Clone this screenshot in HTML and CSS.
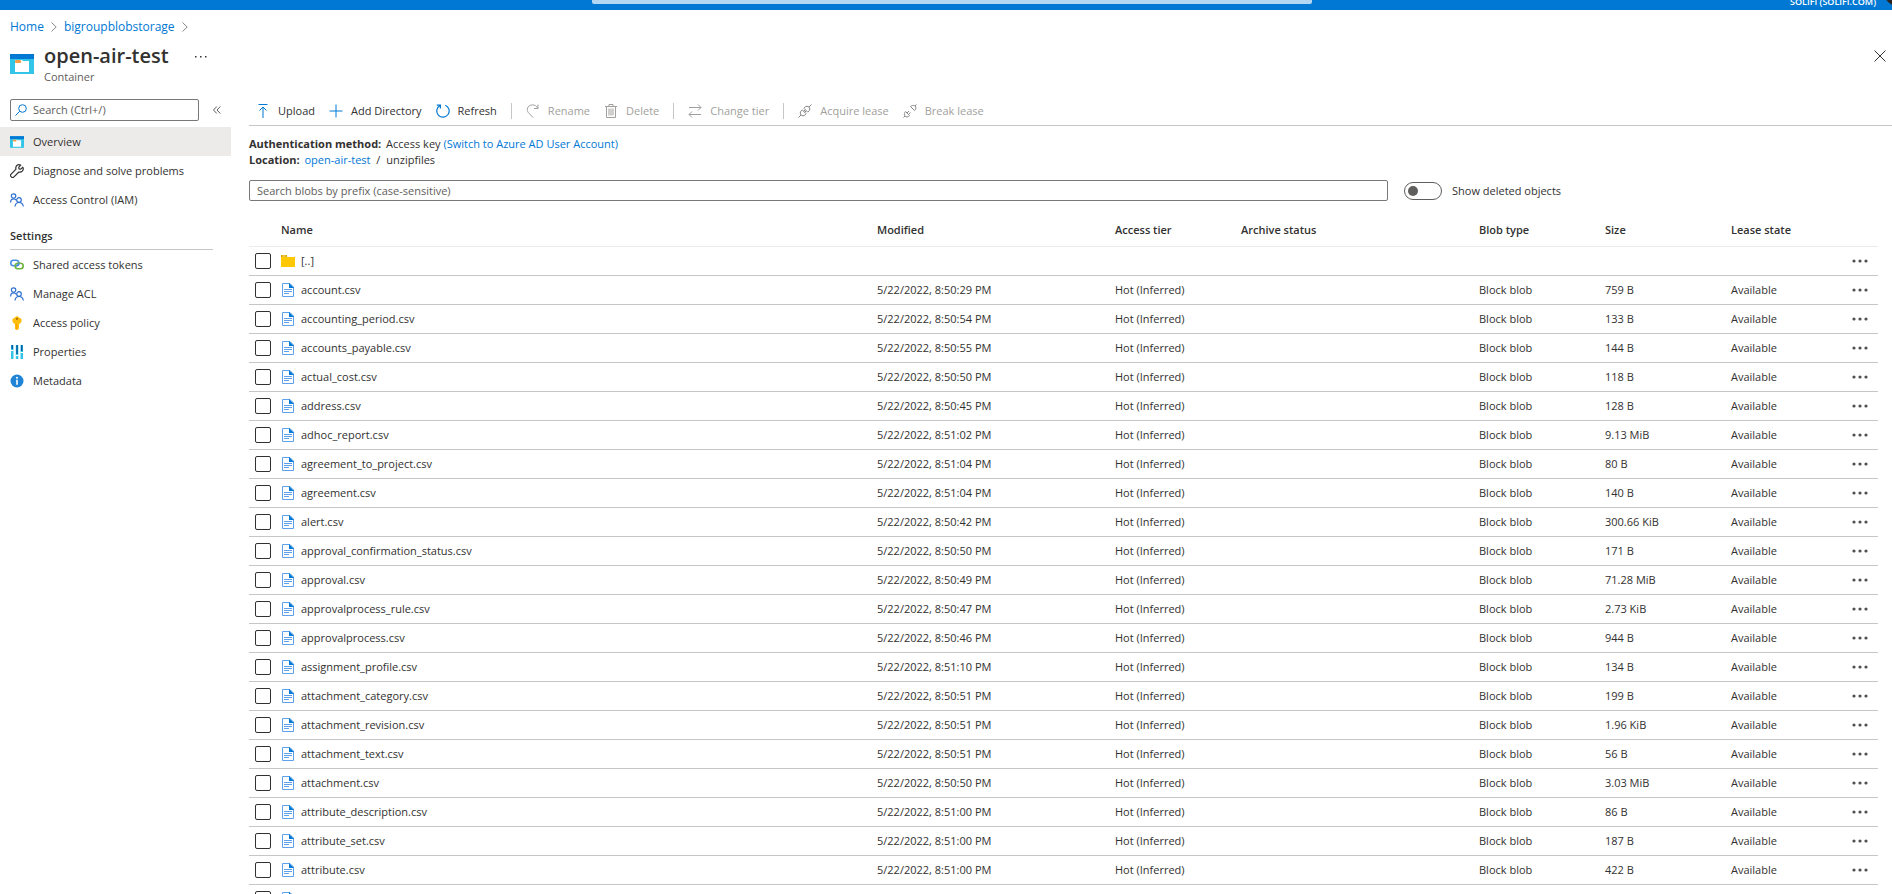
FILE: index.html
```html
<!DOCTYPE html>
<html lang="en">
<head>
  <meta charset="UTF-8">
  <meta name="viewport" content="width=device-width, initial-scale=1.0">
  <title>open-air-test</title>
  <link rel="stylesheet" href="styles.css">
</head>
<body>
  <!-- shared icons -->
  <svg class="sprite" aria-hidden="true">
    <symbol id="icon-container" viewBox="0 0 24 20">
      <rect width="24" height="20" fill="#32c5e8"/>
      <rect width="24" height="5" fill="#0078d4"/>
      <path d="M5 6h7l1 1h6v11H5z" fill="#fff"/>
      <rect x="5" y="6" width="6" height="3" rx="1" fill="#f59d45"/>
    </symbol>
    <symbol id="icon-people" viewBox="0 0 14 14">
      <g fill="none" stroke="#2f6fd0" stroke-width="1.2">
        <circle cx="3.6" cy="3" r="2.2"/>
        <path d="M.6 9.5C.6 7 2 5.800 3.600 5.800c1.200 0 2 .5 2.600 1.400"/>
        <circle cx="9" cy="7" r="2.300"/>
        <path d="M5 13.500c.3-2.600 1.800-4 4-4s3.900 1.400 4.400 4"/>
      </g>
    </symbol>
    <symbol id="icon-file" viewBox="0 0 12 14">
      <path d="M.5.5H8l3.500 3.500v9.500H.5z" fill="#fff" stroke="#5ea0ea"/>
      <path d="M7 0 12 5H7z" fill="#0078d4"/>
      <path d="M2 6.500h8M2 8.500h8M2 10.500h5" stroke="#5ea0ea"/>
    </symbol>
    <symbol id="icon-folder" viewBox="0 0 14 12">
      <path d="M0 0h6v2h8v10H0z" fill="#ffc800"/>
      <path d="M0 0h6v2H0z" fill="#dfa500"/>
      <path d="M1.500 1h3" stroke="#fff0a8" stroke-width=".8"/>
    </symbol>
    <symbol id="icon-more" viewBox="0 0 16 4">
      <g fill="#505050"><circle cx="2" cy="2" r="1.600"/><circle cx="8" cy="2" r="1.600"/><circle cx="14" cy="2" r="1.600"/></g>
    </symbol>
    <symbol id="icon-chevron" viewBox="0 0 6 10">
      <path d="M.5.5 5.200 5 .5 9.500" fill="none" stroke="#8a8886"/>
    </symbol>
  </svg>

  <header class="topbar">
    <input class="topbar-search" type="search" aria-label="Search resources">
    <span class="tenant">SOLIFI (SOLIFI.COM)</span>
    <span class="avatar"></span>
  </header>

  <nav class="breadcrumb" aria-label="Breadcrumb">
    <a href="#">Home</a>
    <svg width="6" height="10"><use href="#icon-chevron"/></svg>
    <a href="#">bigroupblobstorage</a>
    <svg width="6" height="10"><use href="#icon-chevron"/></svg>
  </nav>

  <div class="blade-header">
    <svg width="24" height="20"><use href="#icon-container"/></svg>
    <div class="blade-title">
      <h1>open-air-test</h1>
      <p>Container</p>
    </div>
    <button class="title-more" aria-label="More">
      <svg width="12" height="2" viewBox="0 0 12 2" fill="#323130"><path d="M0 0h1.500v1.500H0zM5 0h1.500v1.500H5zM10 0h1.500v1.500H10z"/></svg>
    </button>
    <button class="close" aria-label="Close">
      <svg width="12" height="12" viewBox="0 0 12 12" stroke="#323130"><path d="M.5.5l11 11M11.500.5l-11 11"/></svg>
    </button>
  </div>

  <div class="blade">
    <aside class="sidebar">
      <div class="menu-search">
        <label class="menu-search-box">
          <svg width="12" height="12" viewBox="0 0 12 12" fill="none" stroke="#0078d4"><circle cx="7.500" cy="4.500" r="3.800"/><path d="M4.800 7.200.5 11.500"/></svg>
          <input type="search" placeholder="Search (Ctrl+/)" aria-label="Search menu">
        </label>
        <button class="collapse" aria-label="Collapse menu">
          <svg width="8" height="8" viewBox="0 0 8 8" fill="none" stroke="#605e5c"><path d="M3.800.5.5 4l3.300 3.500M7.300.5 4 4l3.300 3.500"/></svg>
        </button>
      </div>

      <ul class="menu">
        <li><a class="active" href="#"><svg width="14" height="12"><use href="#icon-container"/></svg>Overview</a></li>
        <li><a href="#"><svg width="14" height="14" viewBox="0 0 14 14" fill="none" stroke="#323130" stroke-width="1.200" stroke-linejoin="round"><path d="M12.800 3.200 10.800 5.200 9 4.900 8.800 3.200l2-2C9.400.4 7.700.6 6.700 1.700c-.9 1-1.100 2.300-.7 3.400L.9 10.300a1.500 1.500 0 0 0 0 2.100l.7.700a1.500 1.500 0 0 0 2.100 0L8.900 8c1.200.4 2.500.1 3.400-.8 1-1.100 1.200-2.700.5-4z"/></svg>Diagnose and solve problems</a></li>
        <li><a href="#"><svg width="14" height="14"><use href="#icon-people"/></svg>Access Control (IAM)</a></li>
      </ul>

      <h2>Settings</h2>
      <ul class="menu">
        <li><a href="#"><svg width="14" height="12" viewBox="0 0 14 12" fill="none" stroke-width="1.600"><rect x=".8" y="1.300" width="8" height="5.400" rx="2.700" stroke="#4a90e2"/><rect x="5.200" y="4.300" width="8" height="5.400" rx="2.700" stroke="#6bb33e"/><path d="M6 6.700h.5c1.300 0 2.300-1 2.300-2.500" stroke="#4a90e2"/></svg>Shared access tokens</a></li>
        <li><a href="#"><svg width="14" height="14"><use href="#icon-people"/></svg>Manage ACL</a></li>
        <li><a href="#"><svg width="14" height="14" viewBox="0 0 14 14"><path d="M7 0l4.500 3v3L9 8.200v4.300L7.500 14H6.200L5 12.800V8.200L2.500 6V3z" fill="#ffbe0b"/><circle cx="7" cy="2.800" r="1.100" fill="#a86a00"/><path d="M6.300 8v5" stroke="#ff9a00"/></svg>Access policy</a></li>
        <li><a href="#"><svg width="14" height="14" viewBox="0 0 14 14"><path d="M1 0h2.500v14H1zM5.800 0h2.500v14H5.800zM10.500 0H13v14h-2.500z" fill="#32c5e8"/><path d="M1.500 0H3v4H1.500zM6.300 0h1.500v9H6.300zM11 0h1.500v6H11z" fill="#005ba1"/><path d="M1 5.500h2.500M5.800 10.500h2.500M10.500 7.500H13" stroke="#fff"/></svg>Properties</a></li>
        <li><a href="#"><svg width="14" height="14" viewBox="0 0 14 14"><circle cx="7" cy="7" r="6.500" fill="#1f83d6"/><circle cx="7" cy="3.700" r="1" fill="#fff"/><path d="M7 5.800v5" stroke="#fff" stroke-width="1.600"/></svg>Metadata</a></li>
      </ul>
    </aside>

    <main class="content">
      <div class="toolbar">
        <button><svg width="14" height="14" viewBox="0 0 14 14" fill="none" stroke="#0078d4"><path d="M2.500.5h9M7 14V3M3.500 6.500 7 3l3.500 3.500"/></svg>Upload</button>
        <button><svg width="14" height="14" viewBox="0 0 14 14" stroke="#0078d4"><path d="M7 .5v13M.5 7h13"/></svg>Add Directory</button>
        <button><svg width="14" height="14" viewBox="0 0 14 14" fill="none" stroke="#0078d4" stroke-width="1.200"><path d="M9.300 1.200A6.200 6.200 0 1 1 4 1.500M.8 1.200h3.600v3.400"/></svg>Refresh</button>
        <span class="divider"></span>
        <button disabled><svg width="14" height="14" viewBox="0 0 14 14" fill="none" stroke="#a19f9d"><path d="M12 .5v4H8M11.800 4.300C10.800 2 8.800.9 6.500.9 3.300.9 1.300 3 1.300 5.500c0 1.700.7 2.800 1.700 3.800l4 4.200"/></svg>Rename</button>
        <button disabled><svg width="14" height="14" viewBox="0 0 14 14" fill="none" stroke="#a19f9d"><path d="M1 2.500h12M5 2.500v-2h4v2M2.500 2.500v11h9v-11M5 4.500v7M7 4.500v7M9 4.500v7"/></svg>Delete</button>
        <span class="divider"></span>
        <button disabled><svg width="14" height="14" viewBox="0 0 14 14" fill="none" stroke="#a19f9d"><path d="M1 3.500h12M10 .5l3 3-3 3M13 10.500H1M4 7.500l-3 3 3 3"/></svg>Change tier</button>
        <span class="divider"></span>
        <button disabled><svg width="14" height="14" viewBox="0 0 14 14" fill="none" stroke="#8a8886"><path d="M.5 13.500l2.500-2.500M11 3 13.500.5M4.200 5.800l4 4-1.100 1.100c-1.200 1.200-2.900 1.200-4 .1s-1.100-2.900 0-4.100zM5.800 4.200l4 4 1.100-1.100c1.200-1.200 1.200-2.900.1-4s-2.900-1.100-4.100 0zM5.500 7.500 7 6M6.500 8.500 8 7"/></svg>Acquire lease</button>
        <button disabled><svg width="14" height="14" viewBox="0 0 14 14" fill="none" stroke="#8a8886"><path d="M.5 13.500 2 12M12 2 13.500.5M2.500 7.500l4 4-.7.700c-1.100 1-2.600 1-3.600 0s-1-2.500-.2-3.900zM7.500 2.500l4 4 .7-.7c1-1.100 1-2.600 0-3.600s-2.500-1-3.900-.2zM4 9l2-2M5.500 10.500l2-2"/></svg>Break lease</button>
      </div>

      <div class="details">
        <p><strong>Authentication method:</strong> Access key <a href="#">(Switch to Azure AD User Account)</a></p>
        <p><strong>Location:</strong> <a href="#">open-air-test</a> <span class="slash">/</span> unzipfiles</p>
      </div>

      <div class="filter">
        <input class="blob-search" type="search" placeholder="Search blobs by prefix (case-sensitive)" aria-label="Search blobs by prefix">
        <label class="toggle"><input type="checkbox" role="switch">Show deleted objects</label>
      </div>

      <table class="blobs">
        <colgroup>
          <col class="col-check"><col class="col-name"><col class="col-modified"><col class="col-tier"><col class="col-archive"><col class="col-type"><col class="col-size"><col class="col-lease"><col class="col-more">
        </colgroup>
        <thead>
          <tr><th></th><th>Name</th><th>Modified</th><th>Access tier</th><th>Archive status</th><th>Blob type</th><th>Size</th><th>Lease state</th><th></th></tr>
        </thead>
        <tbody id="blob-rows"></tbody>
      </table>
    </main>
  </div>

  <script src="script.js"></script>
</body>
</html>
```
FILE: styles.css
```css
* {
  box-sizing: border-box;
}

body {
  margin: 0;
  height: 100vh;
  overflow: hidden;
  font-family: "Segoe UI", "Open Sans", "Noto Sans", sans-serif;
  font-size: 11px;
  line-height: 16px;
  color: #323130;
  background: #fff;
}

h1, h2, p, ul {
  margin: 0;
  padding: 0;
}

a {
  color: #0078d4;
  text-decoration: none;
}

button, input {
  font: inherit;
  color: inherit;
}

button {
  padding: 0;
  border: none;
  background: none;
  cursor: pointer;
}

svg {
  flex: none;
  display: block;
}

.sprite {
  position: absolute;
  width: 0;
  height: 0;
}

/* top bar, scrolled almost out of view */
.topbar {
  display: grid;
  grid-template-columns: 1fr 720px 1fr;
  grid-template-rows: 10px;
  align-items: end;
  height: 10px;
  padding-left: 12px;
  overflow: hidden;
  background: #0078d4;
  position: relative;
}

.topbar-search {
  grid-column: 2;
  height: 24px;
  margin-bottom: 6px;
  border: none;
  border-radius: 2px;
  background: #b3d7f2;
}

.tenant {
  justify-self: end;
  margin-right: 16px;
  margin-bottom: 1px;
  font-size: 9px;
  line-height: 14px;
  font-weight: 600;
  color: #fff;
}

.avatar {
  position: absolute;
  right: -20px;
  bottom: 4px;
  width: 28px;
  height: 28px;
  border-radius: 50%;
  background: #2b2522;
}

.breadcrumb {
  display: flex;
  align-items: center;
  gap: 7px;
  padding: 9px 10px 7px;
  font-size: 12px;
}

.blade-header {
  display: flex;
  align-items: flex-start;
  padding: 4px 6px 0 10px;
  height: 54px;
}

.blade-header > svg {
  margin-top: 8px;
}

.blade-title {
  margin-left: 10px;
}

.blade-title h1 {
  font-size: 20px;
  line-height: 20px;
  font-weight: 600;
}

.blade-title p {
  margin-top: 4px;
  font-size: 11px;
  line-height: 14px;
  color: #605e5c;
}

.title-more {
  margin: 10px 0 0 26px;
}

.close {
  margin: 4px 0 0 auto;
}

.blade {
  display: flex;
}

.sidebar {
  flex: none;
  width: 231px;
  padding-top: 3px;
}

.menu-search {
  display: flex;
  align-items: center;
  gap: 14px;
  padding: 0 10px;
  margin-bottom: 6px;
}

.menu-search-box {
  display: flex;
  align-items: center;
  gap: 6px;
  width: 189px;
  height: 22px;
  padding: 0 4px;
  border: 1px solid #7a7876;
  border-radius: 2px;
}

.menu-search-box input {
  flex: 1;
  min-width: 0;
  padding: 0;
  border: none;
  outline: none;
  background: none;
}

input::placeholder {
  color: #605e5c;
  opacity: 1;
}

.menu {
  list-style: none;
}

.menu a {
  display: flex;
  align-items: center;
  gap: 9px;
  height: 29px;
  padding-left: 10px;
  color: #323130;
}

.menu a.active {
  background: #edebe9;
}

.sidebar h2 {
  margin: 13px 18px 0 10px;
  padding-bottom: 4px;
  border-bottom: 1px solid #c8c6c4;
  font-size: 11px;
  line-height: 18px;
  font-weight: 600;
}

.content {
  flex: 1;
  min-width: 0;
  padding-left: 18px;
}

.toolbar {
  display: flex;
  align-items: center;
  gap: 14px;
  height: 30px;
  padding-left: 7px;
  border-bottom: 1px solid #c8c6c4;
}

.toolbar button {
  display: flex;
  align-items: center;
  gap: 8px;
}

.toolbar button:disabled {
  color: #a19f9d;
  cursor: default;
}

.divider {
  width: 1px;
  height: 16px;
  background: #c8c6c4;
}

.details {
  padding: 10px 0 12px;
}

.details strong {
  font-weight: 700;
  margin-right: 2px;
}

.slash {
  margin: 0 3px;
}

.filter {
  display: flex;
  align-items: center;
  gap: 16px;
  margin-bottom: 14px;
}

.blob-search {
  flex: none;
  width: 1139px;
  max-width: 70%;
  height: 21px;
  padding: 0 7px;
  border: 1px solid #7a7876;
  border-radius: 2px;
  outline: none;
}

.toggle {
  display: flex;
  align-items: center;
  gap: 10px;
}

.toggle input {
  appearance: none;
  display: flex;
  align-items: center;
  width: 38px;
  height: 18px;
  margin: 0;
  padding: 0 3px;
  border: 1px solid #605e5c;
  border-radius: 9px;
}

.toggle input::before {
  content: "";
  width: 10px;
  height: 10px;
  border-radius: 50%;
  background: #605e5c;
}

.toggle input:checked {
  justify-content: flex-end;
}

/* blob list */
.blobs {
  width: calc(100% - 14px);
  table-layout: fixed;
  border-collapse: collapse;
}

.col-check { width: 32px; }
.col-modified { width: 238px; }
.col-tier { width: 126px; }
.col-archive { width: 238px; }
.col-type { width: 126px; }
.col-size { width: 126px; }
.col-lease { width: 121px; }
.col-more { width: 26px; }

.blobs th {
  height: 31px;
  padding: 0;
  text-align: left;
  font-weight: 600;
  border-bottom: 1px solid #edebe9;
}

.blobs td {
  height: 29px;
  padding: 0;
  border-bottom: 1px solid #c8c6c4;
}

.blobs td input {
  appearance: none;
  display: block;
  width: 16px;
  height: 16px;
  margin: 0 0 0 6px;
  border: 1px solid #323130;
  border-radius: 2px;
}

.blobs td input:checked {
  background: #0078d4;
}

.blob-name {
  display: flex;
  align-items: center;
  gap: 6px;
  color: #323130;
}

.blobs button {
  display: block;
}
```
FILE: script.js
```javascript
const blobs = [
  ['account.csv', '8:50:29', '759 B'],
  ['accounting_period.csv', '8:50:54', '133 B'],
  ['accounts_payable.csv', '8:50:55', '144 B'],
  ['actual_cost.csv', '8:50:50', '118 B'],
  ['address.csv', '8:50:45', '128 B'],
  ['adhoc_report.csv', '8:51:02', '9.13 MiB'],
  ['agreement_to_project.csv', '8:51:04', '80 B'],
  ['agreement.csv', '8:51:04', '140 B'],
  ['alert.csv', '8:50:42', '300.66 KiB'],
  ['approval_confirmation_status.csv', '8:50:50', '171 B'],
  ['approval.csv', '8:50:49', '71.28 MiB'],
  ['approvalprocess_rule.csv', '8:50:47', '2.73 KiB'],
  ['approvalprocess.csv', '8:50:46', '944 B'],
  ['assignment_profile.csv', '8:51:10', '134 B'],
  ['attachment_category.csv', '8:50:51', '199 B'],
  ['attachment_revision.csv', '8:50:51', '1.96 KiB'],
  ['attachment_text.csv', '8:50:51', '56 B'],
  ['attachment.csv', '8:50:50', '3.03 MiB'],
  ['attribute_description.csv', '8:51:00', '86 B'],
  ['attribute_set.csv', '8:51:00', '187 B'],
  ['attribute.csv', '8:51:00', '422 B'],
  ['auto_bill_report.csv', '8:50:57', '188 B']
];

function renderRow(name, icon, height, cells) {
  const row = document.createElement('tr');
  row.innerHTML = `
    <td><input type="checkbox" aria-label="Select ${name}"></td>
    <td><a class="blob-name" href="#"><svg width="14" height="${height}"><use href="#${icon}"/></svg>${name}</a></td>
    ${cells.map(cell => `<td>${cell}</td>`).join('')}
    <td><button aria-label="More actions"><svg width="16" height="4"><use href="#icon-more"/></svg></button></td>
  `;
  document.getElementById('blob-rows').appendChild(row);
}

renderRow('[..]', 'icon-folder', 12, ['', '', '', '', '', '']);

blobs.forEach(([name, time, size]) => {
  renderRow(name, 'icon-file', 14, [`5/22/2022, ${time} PM`, 'Hot (Inferred)', '', 'Block blob', size, 'Available']);
});
```
